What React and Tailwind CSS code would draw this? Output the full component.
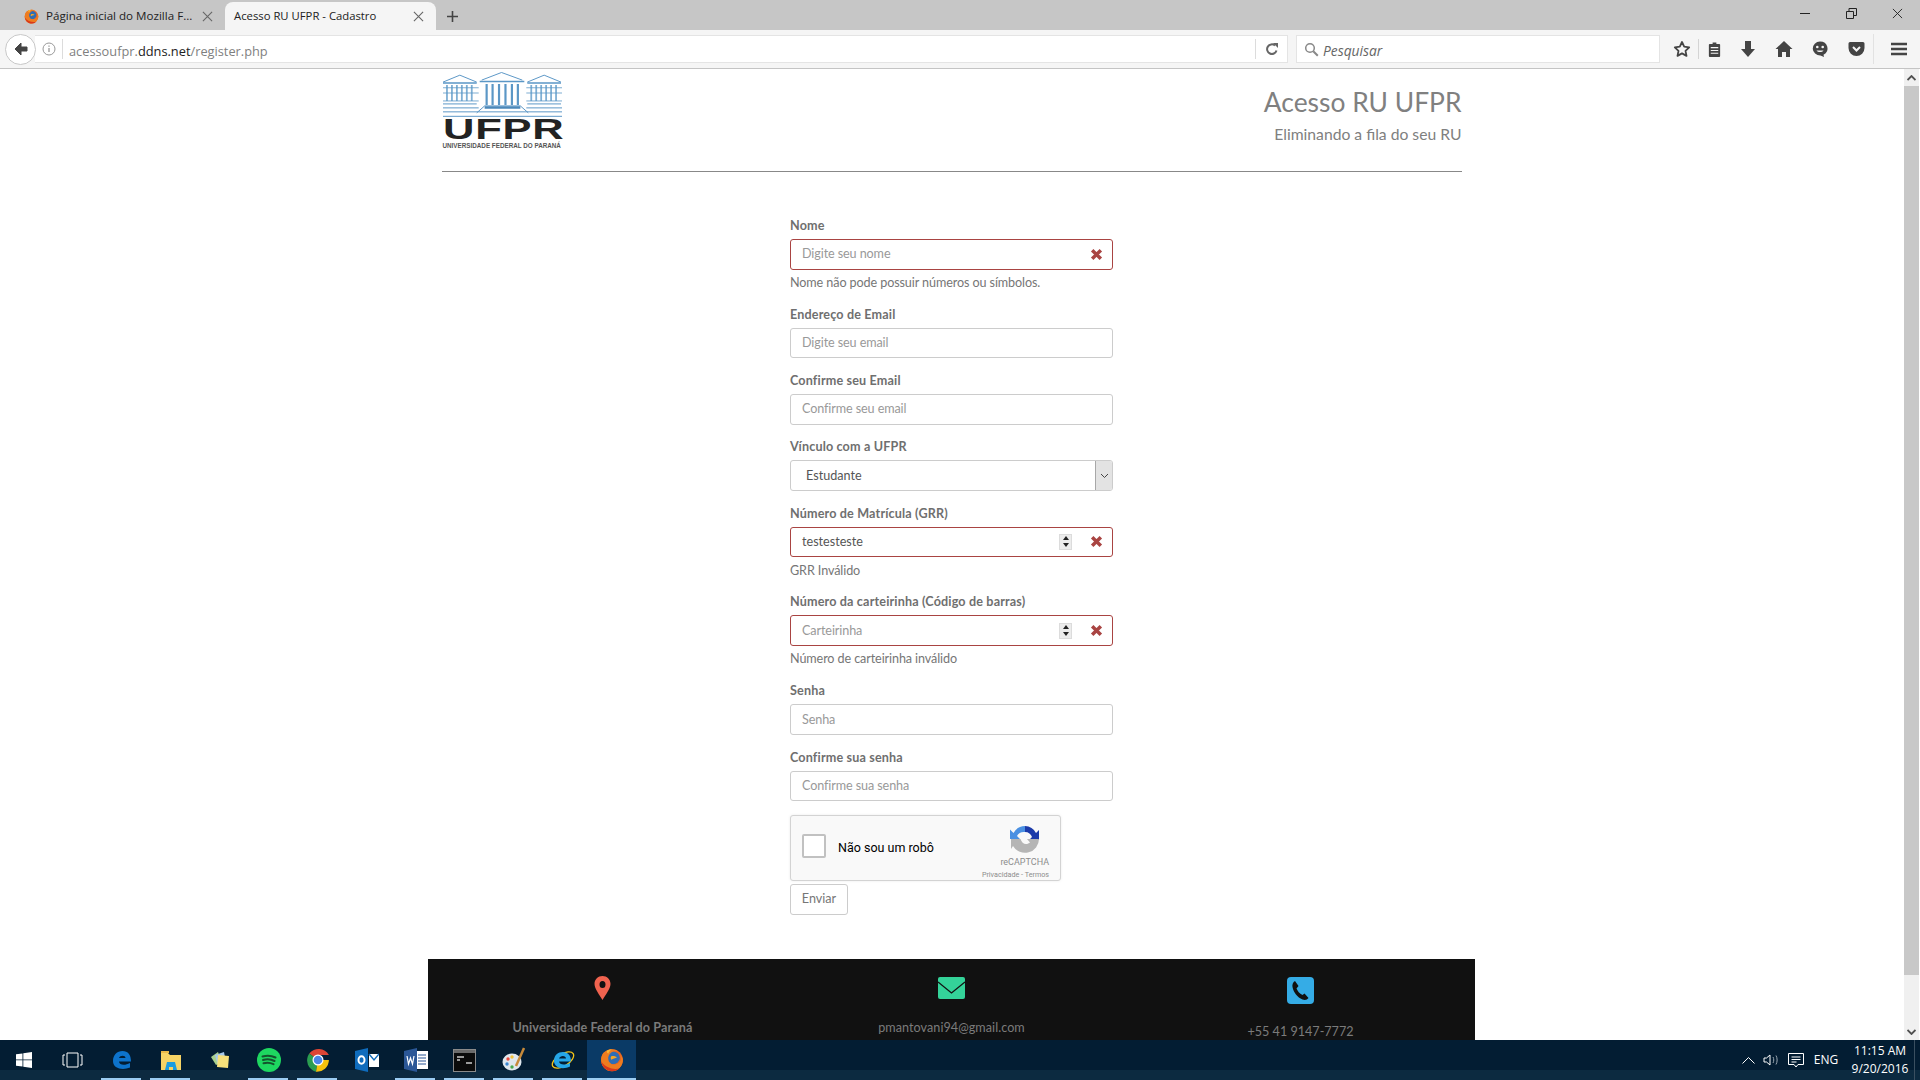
import React from "react";

const X = ({ s = 12, c = "#555", w = 1.2 }) => (
  <svg width={s} height={s} viewBox="0 0 12 12"><path d="M1 1L11 11M11 1L1 11" stroke={c} strokeWidth={w} fill="none" /></svg>
);

const Firefox = ({ s = 18 }) => (
  <svg width={s} height={s} viewBox="0 0 32 32">
    <circle cx="16" cy="16" r="14.500" fill="#e8651f" />
    <ellipse cx="17" cy="13" rx="9.500" ry="8.500" fill="#2f6db5" />
    <path d="M4 7c3-3 7-5.500 12-5.500 3 0 6 1 8.500 3-3-1-6-1-9 1C12 8 10.500 11 11 15c.7 4.500 4.500 7.500 9 7 3-.3 6-2.500 8-6 .2-2.500-.3-5-1-6.500 1.500 1 3 3 3.500 5.500.5 8-6 16-14.500 16C7.500 31 1.500 24.500 1.500 16 1.500 12.500 2.500 9.500 4 7z" fill="#ee7c1f" />
    <path d="M1.700 18c1 7 7 13 14.300 13 4 0 7.500-1.500 10-4-7 2.500-19-.5-24.300-9z" fill="#d9391b" />
    <path d="M15 11c2-1 6-.5 7.500 1.500-2 1.500-5 1-7.500 3-1-1.500-1-3.500 0-4.500z" fill="#f5a623" />
    <path d="M9 3.500c2-1 4-1.800 7-2-2 1-4 3-5 6-1.500-1-2-2.500-2-4z" fill="#f7b733" />
  </svg>
);

const TabBar = () => (
  <div className="h-[30px] bg-[#c6c6c6] flex items-end relative font-['Open_Sans',sans-serif] text-[11.600px] text-[#222] shrink-0">
    <div className="w-[225px] h-[30px] flex items-center pl-[24px] shrink-0 pt-[2px]">
      <Firefox s={15} />
      <span className="ml-[7px] w-[150px] whitespace-nowrap">Página inicial do Mozilla F...</span>
      <span className="ml-[6px]"><X s={11} c="#666" /></span>
    </div>
    <div className="w-[211px] h-[28px] bg-[#f5f5f5] rounded-t-[8px] flex items-center pl-[9px] shrink-0">
      <span className="w-[179px] whitespace-nowrap text-[11.300px]">Acesso RU UFPR - Cadastro</span>
      <span><X s={11} c="#666" /></span>
    </div>
    <div className="w-[32px] h-[30px] flex items-center justify-center shrink-0 pt-[2px]">
      <svg width="13" height="13" viewBox="0 0 13 13"><path d="M6.500 1v11M1 6.500h11" stroke="#444" strokeWidth="1.600" /></svg>
    </div>
    <div className="flex-1" />
    <div className="flex items-center h-[30px] pb-[3px]">
      <div className="w-[46px] flex justify-center"><div className="w-[10px] h-px bg-[#222]" /></div>
      <div className="w-[46px] flex justify-center">
        <svg width="11" height="11" viewBox="0 0 11 11"><path d="M.5 3.500h7v7h-7zM3 3.500V.5h7.500v7H7.500" fill="none" stroke="#222" /></svg>
      </div>
      <div className="w-[46px] flex justify-center"><X s={11} c="#222" w={1} /></div>
    </div>
  </div>
);

const NavIcon = ({ children }) => <div className="w-[36px] flex justify-center shrink-0">{children}</div>;

const NavBar = () => (
  <div className="h-[39px] bg-[#f5f5f5] border-b border-[#c4c4c4] flex items-center relative font-['Open_Sans',sans-serif] shrink-0">
    <div className="w-[38px] flex justify-end shrink-0 z-10 relative">
      <div className="w-[31px] h-[31px] mr-[2px] rounded-full bg-white border border-[#c8c8c8] flex items-center justify-center">
        <svg width="16" height="16" viewBox="0 0 16 16"><path d="M8 2L2 8l6 6v-4h6V6H8z" fill="#444" stroke="#444" strokeWidth="1" strokeLinejoin="round" /></svg>
      </div>
    </div>
    <div className="w-[1253px] h-[28px] bg-white border border-[#e4e4e4] border-l-0 -ml-[3px] flex items-center shrink-0">
      <span className="ml-[7px] mr-[6px]">
        <svg width="14" height="14" viewBox="0 0 14 14"><circle cx="7" cy="7" r="6" fill="none" stroke="#999" /><path d="M7 6v4M7 3.500v1.300" stroke="#999" strokeWidth="1.300" /></svg>
      </span>
      <span className="w-px h-[20px] bg-[#dcdcdc]" />
      <span className="ml-[6px] pt-[4px] text-[12.800px] leading-[18px] text-[#7f7f7f] flex-1 whitespace-nowrap">acessoufpr.<span className="text-[#222]">ddns.net</span>/register.php</span>
      <span className="w-px h-[20px] bg-[#dcdcdc]" />
      <span className="w-[31px] flex justify-center">
        <svg width="14" height="14" viewBox="0 0 14 14"><path d="M11.500 8.500A4.800 4.800 0 1 1 10 3.500" fill="none" stroke="#666" strokeWidth="2" /><path d="M8 1h5v5z" fill="#666" /></svg>
      </span>
    </div>
    <div className="w-[364px] h-[28px] ml-[8px] bg-white border border-[#e4e4e4] flex items-center shrink-0">
      <span className="ml-[7px]">
        <svg width="15" height="15" viewBox="0 0 15 15"><circle cx="6" cy="6" r="4.300" fill="none" stroke="#888" strokeWidth="1.500" /><path d="M9.300 9.300l4.500 4.500" stroke="#888" strokeWidth="2" /></svg>
      </span>
      <span className="ml-[4px] pt-[3px] leading-[18px] italic text-[13.800px] text-[#666]">Pesquisar</span>
    </div>
    <div className="flex items-center ml-[5px] relative">
      <div className="w-[33px] flex justify-center shrink-0">
        <svg width="18" height="18" viewBox="0 0 18 18"><path d="M9 2l2.200 4.700 5 .6-3.700 3.500 1 5.100L9 13.400 4.500 15.900l1-5.100L1.800 7.300l5-.6z" fill="none" stroke="#444" strokeWidth="1.800" strokeLinejoin="round" /></svg>
      </div>
      <span className="w-px h-[20px] bg-[#d4d4d4]" />
      <div className="w-[31px] flex justify-center shrink-0">
        <svg width="15" height="17" viewBox="0 0 16 18"><path d="M3 3h3V1.500h4V3h3a1 1 0 0 1 1 1v12a1 1 0 0 1-1 1H3a1 1 0 0 1-1-1V4a1 1 0 0 1 1-1z" fill="#444" /><path d="M4 7h8M4 10h8M4 13h8" stroke="#f5f5f5" strokeWidth="1.200" /></svg>
      </div>
      <NavIcon><svg width="16" height="18" viewBox="0 0 16 18"><path d="M5 1h6v8h4l-7 8-7-8h4z" fill="#444" /></svg></NavIcon>
      <NavIcon><svg width="18" height="18" viewBox="0 0 18 18"><path d="M9 1l8.500 8h-2.500v8h-4v-5H7v5H3V9H.5z" fill="#444" /></svg></NavIcon>
      <NavIcon><svg width="18" height="18" viewBox="0 0 18 18"><path d="M9 1.500a7.500 7 0 0 1 3.500 13.200L13 17l-3.500-1.500A7.500 7 0 1 1 9 1.500z" fill="#444" /><circle cx="6.300" cy="7" r="1.300" fill="#f5f5f5" /><circle cx="11.700" cy="7" r="1.300" fill="#f5f5f5" /><path d="M5.500 10.500c1.500 2 5.500 2 7 0z" fill="#f5f5f5" /></svg></NavIcon>
      <NavIcon><svg width="17" height="16" viewBox="0 0 17 16"><path d="M2 1h13a1.500 1.500 0 0 1 1.500 1.500V7a8 8 0 0 1-16 0V2.500A1.500 1.500 0 0 1 2 1z" fill="#444" /><path d="M5 6l3.500 3.500L12 6" fill="none" stroke="#f5f5f5" strokeWidth="2" /></svg></NavIcon>
      <span className="w-px h-[30px] bg-[#e2e2e2] -ml-[1px]" />
      <div className="w-[50px] flex justify-center shrink-0">
        <svg width="16" height="14" viewBox="0 0 16 14"><path d="M0 2h16M0 7h16M0 12h16" stroke="#444" strokeWidth="2.600" /></svg>
      </div>
    </div>
  </div>
);

const Logo = () => (
  <div className="w-[120px] h-[78px] ml-[1px] flex flex-col">
    <svg width="119" height="45" viewBox="0 0 120 45" className="shrink-0">
      <g stroke="#5b97c6" fill="none" strokeWidth="1">
        <path d="M0 10L17 3L34 10M39 8L59 .3L80 8M85 10L102 3L119 10" />
        <path d="M0 11h34M37 9.500h45M85 11h34" strokeWidth="1.500" />
        <path d="M0 32h34M85 32h34M0 36h36M84 36h36M0 40h120M0 44.500h120" />
        <path d="M34 41l8-7h36l8 7" />
        <path d="M44 12v21M50 12v21M56.500 12v21M63 12v21M69.500 12v21M75.500 12v21" strokeWidth="2.200" />
        <path d="M4 13v16M9 13v16M14 13v16M19 13v16M24 13v16M29 13v16M89 13v16M94 13v16M99 13v16M104 13v16M109 13v16M114 13v16" strokeWidth="1.800" stroke="#7fafd4" />
        <path d="M0 15.700h36M84 15.700h36M0 21h36M84 21h36M0 29h36M84 29h36" strokeWidth=".8" />
        <path d="M42 35.500h36" strokeWidth="2.500" stroke="#4b88ba" />
      </g>
    </svg>
    <div className="font-['Liberation_Sans',sans-serif] font-bold text-[30px] leading-[24px] h-[24px] text-[#222] tracking-[0.500px] whitespace-nowrap scale-x-[1.450] origin-left w-[81px]">UFPR</div>
    <div className="font-['Liberation_Sans',sans-serif] font-bold text-[6.300px] leading-[9px] text-[#555] whitespace-nowrap">UNIVERSIDADE FEDERAL DO PARANÁ</div>
  </div>
);

const XMark = () => (
  <svg width="13" height="13" viewBox="0 0 12 12"><path d="M2 2l8 8M10 2l-8 8" stroke="#a94442" strokeWidth="3.200" /></svg>
);

const Spin = () => (
  <span className="w-[13px] h-[16px] bg-[#ececec] border border-[#dcdcdc] flex flex-col items-center justify-center gap-[3px] shrink-0">
    <span className="w-0 h-0 border-x-[3px] border-x-transparent border-b-[4px] border-b-[#222]" />
    <span className="w-0 h-0 border-x-[3px] border-x-transparent border-t-[4px] border-t-[#222]" />
  </span>
);

const Field = ({ label, placeholder, value, error, help, spin }) => (
  <div className={help ? "h-[88.750px]" : "h-[66.330px]"}>
    <div className="h-[22px] text-[12.600px] leading-[18px] font-bold text-[#6f6f6f] tracking-[0.150px] whitespace-nowrap">{label}</div>
    <div className={`h-[30.500px] rounded-[3px] border flex items-center pl-[11px] ${error ? "border-[#a94442]" : "border-[#cccccc]"}`}>
      <span className={`flex-1 pt-[1px] text-[12.600px] ${value ? "text-[#555]" : "text-[#999] tracking-[-0.100px]"}`}>{value || placeholder}</span>
      {spin && <Spin />}
      {error && <span className="w-[31px] ml-[9px] flex justify-center"><XMark /></span>}
    </div>
    {help && <div className="mt-[4.500px] text-[12.600px] leading-[18px] text-[#767676] tracking-[-0.100px] whitespace-nowrap">{help}</div>}
  </div>
);

const Captcha = () => (
  <div className="w-[271px] h-[66px] bg-[#f9f9f9] border border-[#d3d3d3] rounded-[3px] shadow-[0_0_3px_rgba(0,0,0,0.08)] flex relative font-['Roboto',sans-serif]">
    <div className="w-[24px] h-[24px] ml-[11px] mt-[18px] bg-white border-2 border-[#c1c1c1] rounded-[2px]" />
    <div className="ml-[12px] mt-[23px] text-[12.500px] leading-[18px] text-black whitespace-nowrap">Não sou um robô</div>
    <div className="ml-auto mr-[11px] mt-[9px] flex flex-col items-end">
      <svg width="30" height="28" viewBox="0 0 30 28" className="mr-[9px]">
        <path d="M15 1A13 13 0 0 0 3.500 8L0 4.500V14h10l-3-3c1.500-3 4.500-4.500 8-4z" fill="#4a90e2" />
        <path d="M15 1a13 13 0 0 1 11 7l3-3v10H19l3-3c-1-3-3.500-5-7-5z" fill="#1c3aa9" />
        <path d="M1 14h9.500c1 3 3 5 5.500 5 1.500 0 3-.6 4-1.500L17 14h12A14 14 0 0 1 3 21l-2 3z" fill="#b5b5b5" />
      </svg>
      <div className="text-[9px] leading-[12px] mt-[3px] text-[#8c8c8c]">reCAPTCHA</div>
      <div className="text-[7.200px] leading-[10px] mt-[2px] text-[#8c8c8c] whitespace-nowrap">Privacidade - Termos</div>
    </div>
  </div>
);

const Form = () => (
  <div className="w-[323px] mx-auto mt-[45px]">
    <Field label="Nome" placeholder="Digite seu nome" error help="Nome não pode possuir números ou símbolos." />
    <Field label="Endereço de Email" placeholder="Digite seu email" />
    <Field label="Confirme seu Email" placeholder="Confirme seu email" />
    <div className="h-[66.330px]">
      <div className="h-[22px] text-[12.600px] leading-[18px] font-bold text-[#6f6f6f] tracking-[0.150px]">Vínculo com a UFPR</div>
      <div className="h-[30.500px] rounded-[3px] border border-[#cccccc] flex items-center pl-[15px] text-[12.600px] text-[#555]">
        <span className="flex-1 pt-[1px]">Estudante</span>
        <span className="w-[17px] self-stretch bg-[#e3e3e3] border-l border-[#a8a8a8] rounded-r-[2px] flex items-center justify-center">
          <svg width="9" height="6" viewBox="0 0 9 6"><path d="M1 1l3.500 3.500L8 1" fill="none" stroke="#444" strokeWidth="1" /></svg>
        </span>
      </div>
    </div>
    <Field label="Número de Matrícula (GRR)" value="testesteste" error spin help="GRR Inválido" />
    <Field label="Número da carteirinha (Código de barras)" placeholder="Carteirinha" error spin help="Número de carteirinha inválido" />
    <Field label="Senha" placeholder="Senha" />
    <div className="h-[66.500px]">
      <Field label="Confirme sua senha" placeholder="Confirme sua senha" />
    </div>
    <Captcha />
    <div className="mt-[2.500px] w-[58px] h-[31px] border border-[#cccccc] rounded-[3px] flex items-center justify-center text-[12.600px] text-[#767676]">Enviar</div>
  </div>
);

const Pin = () => (
  <svg width="17" height="24" viewBox="0 0 17 24"><path fillRule="evenodd" d="M8.500 0C4 0 .5 3.500.5 8c0 4.500 5 11 8 16 3-5 8-11.500 8-16 0-4.500-3.500-8-8-8zm0 5a3 3.500 0 1 1 0 7 3 3.500 0 0 1 0-7z" fill="#f0634f" /></svg>
);
const Mail = () => (
  <svg width="27" height="22" viewBox="0 0 27 22"><rect width="27" height="22" rx="2" fill="#34d399" /><path d="M0 5l13.500 11L27 5" fill="none" stroke="#111" strokeWidth="1.300" /></svg>
);
const Phone = () => (
  <svg width="27" height="27" viewBox="0 0 27 27"><rect width="27" height="27" rx="4" fill="#35ace6" /><path d="M8 4l3.500 5-2 2.500c1 2.500 3 5 6 6.500l2-1.500 4 4.500c-1.500 2-3.500 2.500-6 1.500-5-2-9-7-10-12.500C5 7.500 6 5 8 4z" fill="#111" /></svg>
);

const FooterCol = ({ icon, text, bold }) => (
  <div className="w-[349px] flex flex-col items-center">
    <div className="h-[34px] flex items-center">{icon}</div>
    <div className={`mt-[14px] whitespace-nowrap text-[12.600px] leading-[18px] text-[#7b7b7b] ${bold ? "font-bold tracking-[0.100px]" : "tracking-[0.050px]"}`}>{text}</div>
  </div>
);

const Footer = () => (
  <div className="w-[1047px] mx-auto mt-[44.500px] h-[200px] bg-[#111111] flex pt-[12px]">
    <FooterCol icon={<Pin />} text="Universidade Federal do Paraná" bold />
    <FooterCol icon={<Mail />} text="pmantovani94@gmail.com" />
    <div className="w-[349px] flex flex-col items-center">
      <div className="h-[38px] flex items-center"><Phone /></div>
      <div className="mt-[14px] whitespace-nowrap text-[12.600px] leading-[18px] text-[#7b7b7b]">+55 41 9147-7772</div>
    </div>
  </div>
);

const Scrollbar = () => (
  <div className="w-[17px] flex flex-col shrink-0 pl-[1px] pr-[1px]">
    <div className="h-[17px] bg-[#f0f0f0] flex items-center justify-center">
      <svg width="9" height="6" viewBox="0 0 9 6"><path d="M.5 5L4.500 1l4 4" fill="none" stroke="#505050" strokeWidth="1.800" /></svg>
    </div>
    <div className="h-[889px] bg-[#c8c8c8]" />
    <div className="flex-1 bg-[#f0f0f0]" />
    <div className="h-[17px] bg-[#f0f0f0] flex items-center justify-center">
      <svg width="9" height="6" viewBox="0 0 9 6"><path d="M.5 1l4 4 4-4" fill="none" stroke="#505050" strokeWidth="1.800" /></svg>
    </div>
  </div>
);

const Slot = ({ children, line, active }) => (
  <div className={`w-[49px] h-[40px] flex items-center justify-center relative shrink-0 ${active ? "bg-[#0a3a66]" : ""}`}>
    {children}
    {line && <span className={`absolute bottom-0 h-[2px] bg-[#9ccdf2] ${active ? "left-0 right-0" : "left-[4px] right-[5px]"}`} />}
  </div>
);

const Taskbar = () => (
  <div className="h-[40px] bg-[linear-gradient(#031d33_0,#031d33_30px,#0c2a40_30px,#0c2a40_40px)] flex items-center relative text-white font-['Open_Sans',sans-serif] shrink-0">
    <div className="-ml-[1px]" />
    <Slot><svg width="16" height="16" viewBox="0 0 16 16"><path d="M0 2.300l6.500-.9v6.100H0zM7.300 1.300L16 0v7.500H7.300zM0 8.300h6.500v6.200L0 13.700zM7.300 8.300H16V16l-8.700-1.200z" fill="#fff" /></svg></Slot>
    <Slot><svg width="21" height="16" viewBox="0 0 21 16"><path d="M5 1h11v14H5zM3 3H1v10h2M18 3h2v10h-2" fill="none" stroke="#fff" /></svg></Slot>
    <Slot line><svg width="20" height="20" viewBox="0 0 20 20"><path d="M1 11C1 5 5 1 10.500 1 16 1 19 5 19 11.500H7c.3 3.500 5.500 4.500 11 1.500v4.500c-7 3-17 1.500-17-6.500zM7 8h6.500c0-3-5.500-3-6.500 0z" fill="#0d73cc" /></svg></Slot>
    <Slot line><svg width="22" height="20" viewBox="0 0 22 20"><path d="M1 3h7l2 2h11v15H1z" fill="#f6d365" /><path d="M1 1h8v2H1z" fill="#e9b949" /><path d="M7 12h8l2 8H5z" fill="#1b9ce0" /><path d="M9 17h4v3H9z" fill="#f6d365" /></svg></Slot>
    <Slot><svg width="22" height="22" viewBox="0 0 22 22"><path d="M2 8l7-5 4 10-6 3z" fill="#a9d18e" /><path d="M6 6l9-3 2 11-8 3z" fill="#a6c8ea" /><path d="M9 6l11 1-1 12-11-1z" fill="#f7e07a" /></svg></Slot>
    <Slot line><svg width="24" height="24" viewBox="0 0 24 24"><circle cx="12" cy="12" r="12" fill="#1ed760" /><path d="M5.500 8.500c4-1.200 9-1 13 1M6 12c3.500-1 8-.8 11.500 1M6.500 15.300c3-.8 7-.6 10 .9" fill="none" stroke="#14532d" strokeWidth="2" strokeLinecap="round" /></svg></Slot>
    <Slot line>
      <svg width="24" height="24" viewBox="0 0 24 24">
        <path d="M12 12L3.200 5.500A12 12 0 0 1 22.900 7H12z" fill="#dc4535" />
        <path d="M12 12L10 23.800A12 12 0 0 1 3.200 5.500z" fill="#2a9d50" />
        <path d="M12 12h10.900A12 12 0 0 1 10 23.800z" fill="#f4c20d" />
        <circle cx="12" cy="12" r="5.500" fill="#fff" /><circle cx="12" cy="12" r="4.300" fill="#4a86e8" />
      </svg>
    </Slot>
    <Slot><svg width="24" height="24" viewBox="0 0 24 24"><path d="M0 3l13-3v24L0 21z" fill="#0f6cbd" /><path d="M14 6h10v13H14z" fill="#fff" /><path d="M14 6l5 6 5-6" fill="none" stroke="#0f6cbd" strokeWidth="1.400" /><ellipse cx="6.500" cy="12" rx="3" ry="3.800" fill="none" stroke="#fff" strokeWidth="2" /></svg></Slot>
    <Slot line><svg width="24" height="24" viewBox="0 0 24 24"><path d="M9 3h15v18H9z" fill="#fff" /><path d="M14 7h8M14 10h8M14 13h8M14 16h8" stroke="#2b5797" strokeWidth="1.200" /><path d="M0 3l13-3v24L0 21z" fill="#2b5797" /><path d="M3 8l1.500 8 2-6 2 6L10 8" fill="none" stroke="#fff" strokeWidth="1.200" /></svg></Slot>
    <Slot line><svg width="23" height="23" viewBox="0 0 23 23"><rect x=".5" y=".5" width="22" height="22" fill="#0b0b0b" stroke="#8a8a8a" /><rect x="1" y="1" width="21" height="3" fill="#6b6b6b" /><path d="M4 8h7M4 11h3M13 14h6" stroke="#ccc" strokeWidth="1.300" /></svg></Slot>
    <Slot line><svg width="24" height="26" viewBox="0 0 24 26"><ellipse cx="10" cy="15" rx="9.500" ry="8.500" fill="#dfe7ee" /><circle cx="6" cy="12" r="1.700" fill="#e84a3d" /><circle cx="5" cy="17" r="1.700" fill="#3c86d0" /><circle cx="10" cy="10" r="1.700" fill="#f3c33b" /><circle cx="10" cy="20" r="1.700" fill="#49a94e" /><path d="M14 19L22 1" stroke="#c78a3a" strokeWidth="2.500" /></svg></Slot>
    <Slot line><svg width="24" height="24" viewBox="0 0 24 24"><ellipse cx="12" cy="12" rx="12" ry="6" transform="rotate(-32 12 12)" fill="none" stroke="#f5c518" strokeWidth="1.300" /><path d="M3 13c0-6 4-9 9-9s8 3.500 8 9.500H8c.3 3.500 6 4 11 1.500v3.500c-7 3.500-16 1.500-16-5.500zM8 10.500h7c0-3.500-6-3.500-7 0z" fill="#25a6e8" /></svg></Slot>
    <Slot line active><Firefox s={24} /></Slot>
    <div className="flex-1" />
    <div className="flex items-center">
      <span className="w-[24px] flex justify-center"><svg width="13" height="8" viewBox="0 0 13 8"><path d="M.5 7.500l6-6 6 6" fill="none" stroke="#fff" /></svg></span>
      <span className="w-[24px] flex justify-center"><svg width="18" height="14" viewBox="0 0 18 14"><path d="M1 5h2.500L7 2v10L3.500 9H1z" fill="none" stroke="#fff" /><path d="M10 4c1 1.500 1 4.500 0 6M13 2.500c1.500 2.500 1.500 6.500 0 9" fill="none" stroke="#9ba7b2" /></svg></span>
      <span className="w-[24px] flex justify-center"><svg width="16" height="15" viewBox="0 0 16 15"><path d="M.5.5h15v11H10l-2 2.500-2-2.500H.5zM3.500 4h9M3.500 6.500h9M3.500 9h5" fill="none" stroke="#fff" /></svg></span>
      <span className="w-[36px] text-center text-[12px]">ENG</span>
      <div className="w-[70px] pl-[2px] text-center text-[12px] leading-[18px] whitespace-nowrap">
        <div>11:15 AM</div>
        <div>9/20/2016</div>
      </div>
      <span className="w-[6px] h-[40px] border-l border-[#3a4f60]" />
    </div>
  </div>
);

export default function App() {
  return (
    <div className="h-screen w-full overflow-hidden flex flex-col bg-white font-['Lato',sans-serif]">
      <TabBar />
      <NavBar />
      <div className="flex-1 min-h-0 flex overflow-hidden">
        <div className="flex-1 min-w-0 overflow-hidden">
          <div className="w-[1020px] mx-auto pt-[3px] h-[99px] border-b border-[#888] flex justify-between box-content">
            <Logo />
            <div className="text-right text-[#808080] pt-[10.500px]">
              <div className="text-[26.400px] leading-[38px]">Acesso RU UFPR</div>
              <div className="text-[15.700px] leading-[26px]">Eliminando a fila do seu RU</div>
            </div>
          </div>
          <Form />
          <Footer />
        </div>
        <Scrollbar />
      </div>
      <Taskbar />
    </div>
  );
}
